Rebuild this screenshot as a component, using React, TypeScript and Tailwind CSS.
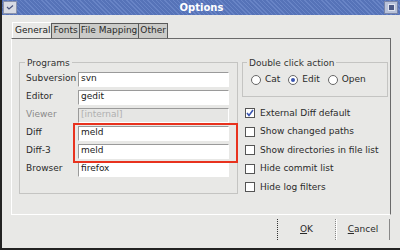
import React from "react";

const font = { fontFamily: '"DejaVu Sans", sans-serif' };

function Field({ label, value, disabled }: { label: string; value: string; disabled?: boolean }) {
  return (
    <div className="flex items-center h-[18px]">
      <div className={`w-[52px] ${disabled ? "text-[#8a8a8a]" : "text-[#2a2a2a]"}`}>{label}</div>
      <div
        className={`w-[151px] h-[15px] flex items-center pl-[2px] border-t border-l border-t-[#9a9a9a] border-l-[#9a9a9a] border-b border-r border-b-[#ffffff] border-r-[#ffffff] ${
          disabled ? "bg-[#e6e6e4] text-[#b0b0b0]" : "bg-white text-[#1a1a1a]"
        }`}
      >
        {value}
      </div>
    </div>
  );
}

function Check({ label, checked }: { label: string; checked?: boolean }) {
  return (
    <div className="flex items-center h-[18.5px] gap-[5px]">
      <div className="w-[10px] h-[10px] border border-[#555] bg-white flex items-center justify-center">
        {checked && (
          <svg width="8" height="8" viewBox="0 0 8 8">
            <path d="M1 4 L3 6.5 L7 1" stroke="#3a55b0" strokeWidth="1.6" fill="none" />
          </svg>
        )}
      </div>
      <span>{label}</span>
    </div>
  );
}

function Radio({ label, checked }: { label: string; checked?: boolean }) {
  return (
    <div className="flex items-center gap-[4px]">
      <div className="w-[10px] h-[10px] rounded-full border border-[#666] bg-white flex items-center justify-center">
        {checked && <div className="w-[4px] h-[4px] rounded-full bg-[#3a55b0]" />}
      </div>
      <span>{label}</span>
    </div>
  );
}

export default function App() {
  return (
    <div
      className="w-[400px] h-[250px] bg-[#e8e8e6] flex flex-col text-[9px] text-[#2a2a2a] border-l-2 border-b-2 border-[#222] overflow-hidden"
      style={font}
    >
      {/* title bar */}
      <div className="h-[15px] shrink-0 flex items-center justify-between bg-[repeating-linear-gradient(45deg,#5673b8_0px,#5673b8_2px,#6884c6_2px,#6884c6_3px)]">
        <div className="ml-[1px] w-[14px] h-[13px] bg-[#d8dbe4] border border-[#8a93ad] flex items-center justify-center">
          <svg width="8" height="6" viewBox="0 0 8 6">
            <path d="M1 2 L3 4 L7 0.5" stroke="#4a5680" strokeWidth="1.2" fill="none" />
          </svg>
        </div>
        <div className="text-white font-bold text-[10px] pl-[2px]">Options</div>
        <div className="mr-[2px] w-[14px] h-[13px] bg-[#b8c2da] border border-[#7a86a8] flex items-center justify-center">
          <div className="w-[7px] h-[7px] bg-[#4c5a86] border border-[#dfe3ee]" />
        </div>
      </div>

      <div className="flex-1 flex flex-col pl-[9px] pr-[9px] pt-[7px]">
        {/* tabs */}
        <div className="flex h-[16px] items-end ml-[1px]">
          <div className="h-[16px] pl-[2px] pr-[1px] flex items-center bg-[#e8e8e6] border-l border-t border-[#ffffff] text-[#1a1a1a]">General</div>
          <div className="h-[15px] px-[1px] flex items-center bg-[#cbcbc8] border border-[#5a5a5a] border-b-0">Fonts</div>
          <div className="h-[15px] px-[1px] flex items-center bg-[#cbcbc8] border border-[#5a5a5a] border-b-0 border-l-0">File Mapping</div>
          <div className="h-[15px] px-[1px] flex items-center bg-[#cbcbc8] border border-[#5a5a5a] border-b-0 border-l-0">Other</div>
        </div>
        {/* panel */}
        <div className="h-[177px] border-l border-b border-white border-r border-r-[#6a6a6a] border-t border-t-[#6a6a6a] flex pt-[23px] pl-[7px] pr-[2px] gap-[4px]">
          {/* programs group */}
          <div className="relative w-[219px] h-[132px] border border-[#c4c4c2] pt-[7px] pl-[6px]">
            <div className="absolute -top-[6px] left-[5px] px-[2px] bg-[#e8e8e6] text-[#333]">Programs</div>
            <Field label="Subversion" value="svn" />
            <Field label="Editor" value="gedit" />
            <Field label="Viewer" value="[internal]" disabled />
            <Field label="Diff" value="meld" />
            <Field label="Diff-3" value="meld" />
            <Field label="Browser" value="firefox" />
            <div className="absolute left-[53px] top-[60px] w-[165px] h-[40px] border-2 border-[#e8321e]" />
          </div>
          {/* right column */}
          <div className="flex flex-col">
            <div className="relative w-[146px] h-[35px] border border-[#c4c4c2] flex items-center gap-[8px] pl-[8px] pt-[1px]">
              <div className="absolute -top-[6px] left-[4px] px-[2px] bg-[#e8e8e6] text-[#333]">Double click action</div>
              <Radio label="Cat" />
              <Radio label="Edit" checked />
              <Radio label="Open" />
            </div>
            <div className="pl-[3px] pt-[7px]">
              <Check label="External Diff default" checked />
              <Check label="Show changed paths" />
              <Check label="Show directories in file list" />
              <Check label="Hide commit list" />
              <Check label="Hide log filters" />
            </div>
          </div>
        </div>
        {/* buttons */}
        <div className="flex justify-end pt-[4px] pr-[1px]">
          <div className="w-[59px] h-[21px] border-l border-dotted border-l-[#333] border-r border-r-[#888] flex items-center justify-center">
            <span><u>O</u>K</span>
          </div>
          <div className="w-[54px] h-[21px] border-l border-white border-r border-r-[#888] flex items-center justify-center">
            <span><u>C</u>ancel</span>
          </div>
        </div>
      </div>
    </div>
  );
}
